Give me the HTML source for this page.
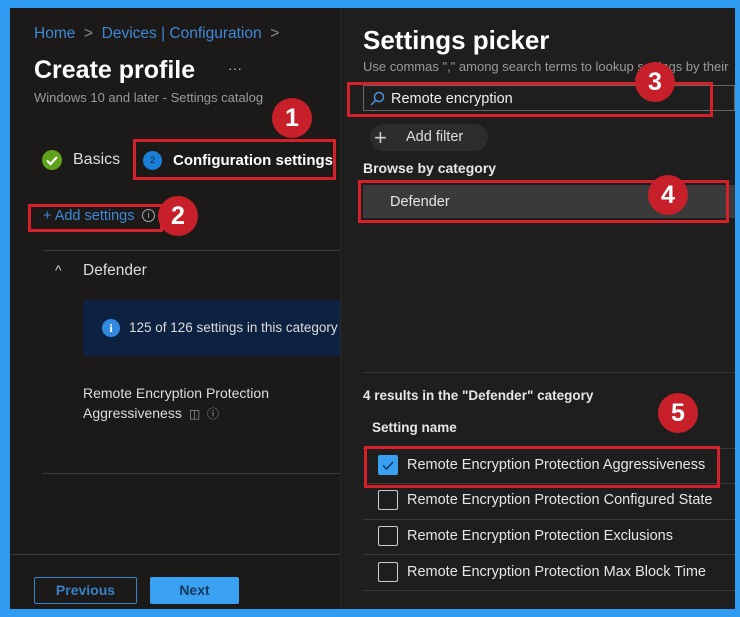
<!DOCTYPE html>
<html><head><meta charset="utf-8"><style>
*{margin:0;padding:0;box-sizing:border-box}
body{width:740px;height:617px;background:#2f9cf2;position:relative;overflow:hidden;font-family:"Liberation Sans",sans-serif;color:#fff}
.a{position:absolute;white-space:nowrap}
.red{position:absolute;border:3px solid #d3202a}
.badge{position:absolute;width:40px;height:40px;border-radius:50%;background:#c8202a;color:#fff;font:bold 25px "Liberation Sans",sans-serif;text-align:center;line-height:40px}
.line{position:absolute;height:1px;background:#3a3a3a}
.cb{position:absolute;width:20px;height:20px;border:1.5px solid #cfcfcf;border-radius:2px}
.rt{position:absolute;font-size:14.5px;color:#e6e6e6;left:407px}
</style></head><body>
<div class="a" style="left:10px;top:8px;width:330px;height:601px;background:#1b1a19"></div>
<div class="a" style="left:340px;top:8px;width:395px;height:601px;background:#1e1e1e"></div>
<div class="a" style="left:340px;top:8px;width:1px;height:601px;background:#2a2a2a"></div>

<div class="a" style="left:34px;top:25px;font-size:15.5px;color:#3f88d6">Home <span style="color:#888">&nbsp;&gt;&nbsp;</span> Devices | Configuration <span style="color:#888">&nbsp;&gt;</span></div>
<div class="a" style="left:34px;top:56px;font-size:25px;font-weight:bold">Create profile</div>
<div class="a" style="left:228px;top:60px;font-size:14px;color:#bbb">···</div>
<div class="a" style="left:34px;top:90px;font-size:13px;color:#9a9a9a">Windows 10 and later - Settings catalog</div>

<div class="a" style="left:42px;top:150px;width:20px;height:20px;border-radius:50%;background:#5ea21c"><svg width="20" height="20"><path d="M5 10.5l3.5 3.5 6.5-7" stroke="#fff" stroke-width="2.2" fill="none"/></svg></div>
<div class="a" style="left:73px;top:151px;font-size:16px;color:#ddd">Basics</div>
<div class="a" style="left:143px;top:151px;width:19px;height:19px;border-radius:50%;background:#1a7fd6;font-size:9px;text-align:center;line-height:19px;color:#123">2</div>
<div class="a" style="left:173px;top:152px;font-size:15px;font-weight:bold">Configuration settings</div>
<div class="red" style="left:133px;top:139px;width:203px;height:41px"></div>
<div class="badge" style="left:272px;top:98px">1</div>

<div class="a" style="left:43px;top:208px;font-size:14.5px;color:#3f88d6">+ Add settings</div>
<div class="a" style="left:142px;top:209px;width:13px;height:13px;border:1px solid #aaa;border-radius:50%;font-size:9px;text-align:center;line-height:11px;color:#aaa">i</div>
<div class="red" style="left:28px;top:204px;width:135px;height:28px"></div>
<div class="badge" style="left:158px;top:196px">2</div>

<div class="line" style="left:43px;top:250px;width:297px"></div>
<div class="a" style="left:55px;top:262px;font-size:14px;color:#ccc">^</div>
<div class="a" style="left:83px;top:262px;font-size:15.5px;color:#ddd">Defender</div>
<div class="a" style="left:83px;top:300px;width:257px;height:56px;background:#0c2240"></div>
<div class="a" style="left:102px;top:319px;width:18px;height:18px;border-radius:50%;background:#2f8ae0;font:bold 12px 'Liberation Serif',serif;text-align:center;line-height:18px">i</div>
<div class="a" style="left:129px;top:320px;font-size:13.5px;color:#ddd">125 of 126 settings in this category</div>
<div class="a" style="left:83px;top:383px;font-size:14px;color:#ddd;line-height:20px">Remote Encryption Protection<br>Aggressiveness <span style="color:#999;font-size:12px">&nbsp;◫ &nbsp;ⓘ</span></div>
<div class="line" style="left:43px;top:473px;width:297px"></div>
<div class="line" style="left:10px;top:554px;width:330px"></div>
<div class="a" style="left:34px;top:577px;width:103px;height:27px;border:1px solid #3a82c8;border-radius:2px;font-size:14px;font-weight:bold;color:#3a82c8;text-align:center;line-height:25px">Previous</div>
<div class="a" style="left:150px;top:577px;width:89px;height:27px;background:#3aa0f0;border-radius:2px;font-size:14px;font-weight:bold;color:#14385e;text-align:center;line-height:27px">Next</div>

<div class="a" style="left:363px;top:25px;font-size:26px;font-weight:bold">Settings picker</div>
<div class="a" style="left:363px;top:59px;font-size:13px;color:#9a9a9a">Use commas "," among search terms to lookup settings by their</div>
<div class="a" style="left:363px;top:85px;width:372px;height:26px;border:1px solid #666;background:#1e1e1e"></div>
<svg class="a" style="left:369px;top:91px" width="16" height="16"><circle cx="10" cy="6" r="4.5" stroke="#4a90d9" stroke-width="1.5" fill="none"/><path d="M7 9l-5 5" stroke="#4a90d9" stroke-width="1.5"/></svg>
<div class="a" style="left:391px;top:91px;font-size:14.5px;color:#eee">Remote encryption</div>
<div class="red" style="left:347px;top:82px;width:366px;height:35px"></div>
<div class="badge" style="left:635px;top:62px">3</div>
<div class="a" style="left:370px;top:124px;width:118px;height:27px;border-radius:14px;background:#2c2c2c"></div>
<div class="a" style="left:374px;top:125px;font-size:22px;color:#ccc;font-weight:300">+</div>
<div class="a" style="left:406px;top:129px;font-size:14.5px;color:#ddd">Add filter</div>
<div class="a" style="left:363px;top:160px;font-size:14px;font-weight:bold;color:#e6e6e6">Browse by category</div>
<div class="a" style="left:363px;top:185px;width:372px;height:33px;background:#3a3a3a"></div>
<div class="a" style="left:390px;top:194px;font-size:14.5px;color:#e6e6e6">Defender</div>
<div class="red" style="left:358px;top:180px;width:371px;height:43px"></div>
<div class="badge" style="left:648px;top:175px">4</div>

<div class="line" style="left:363px;top:372px;width:372px;background:#333"></div>
<div class="a" style="left:363px;top:388px;font-size:13.5px;font-weight:bold;color:#e6e6e6">4 results in the "Defender" category</div>
<div class="a" style="left:372px;top:420px;font-size:13.5px;font-weight:bold;color:#e6e6e6">Setting name</div>
<div class="badge" style="left:658px;top:393px">5</div>
<div class="line" style="left:363px;top:448px;width:372px"></div>
<div class="line" style="left:363px;top:483px;width:372px"></div>
<div class="line" style="left:363px;top:519px;width:372px"></div>
<div class="line" style="left:363px;top:554px;width:372px"></div>
<div class="line" style="left:363px;top:590px;width:372px"></div>
<div class="a" style="left:378px;top:455px;width:20px;height:20px;background:#3a9ff0;border-radius:2px"><svg width="20" height="20"><path d="M5 10.5l3.5 3.5 6.5-7" stroke="#0c3560" stroke-width="1.4" fill="none"/></svg></div>
<div class="rt" style="top:457px">Remote Encryption Protection Aggressiveness</div>
<div class="cb" style="left:378px;top:490px"></div>
<div class="rt" style="top:492px">Remote Encryption Protection Configured State</div>
<div class="cb" style="left:378px;top:526px"></div>
<div class="rt" style="top:528px">Remote Encryption Protection Exclusions</div>
<div class="cb" style="left:378px;top:562px"></div>
<div class="rt" style="top:564px">Remote Encryption Protection Max Block Time</div>
<div class="red" style="left:364px;top:446px;width:356px;height:42px"></div>
</body></html>
